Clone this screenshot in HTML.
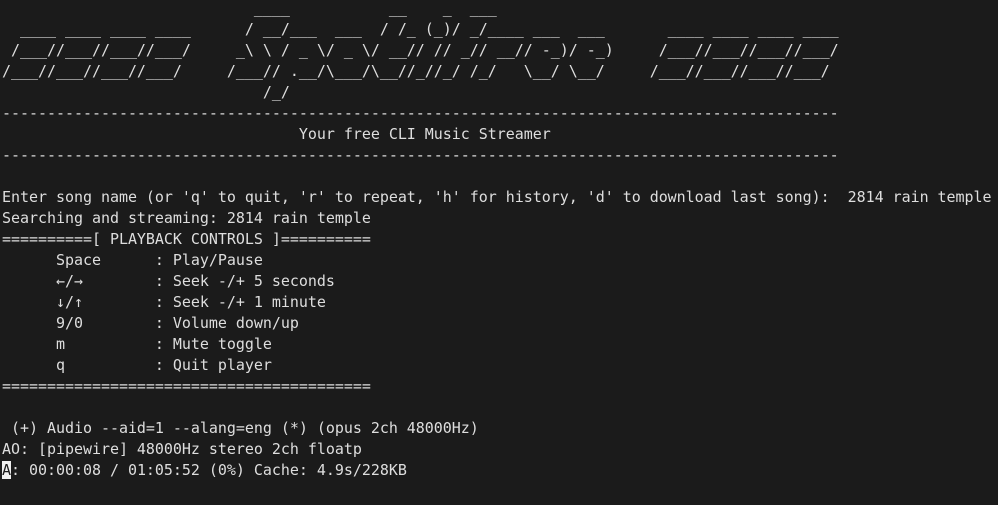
<!DOCTYPE html>
<html><head><meta charset="utf-8"><style>
html,body{margin:0;padding:0;background:#1b1b1b;width:998px;height:505px;overflow:hidden}
pre{position:absolute;left:2px;top:-2.5px;margin:0;font-family:"DejaVu Sans Mono","Liberation Mono",monospace;font-size:15px;line-height:21px;letter-spacing:-0.035px;color:#dedede;white-space:pre}
.cur{background:#f0f0f0;color:#1b1b1b}
</style></head><body>
<pre>                            ____           __    _  ___
  ____ ____ ____ ____      / __/___  ___  / /_ (_)/ _/____ ___  ___       ____ ____ ____ ____
 /___//___//___//___/     _\ \ / _ \/ _ \/ __// // _// __// -_)/ -_)     /___//___//___//___/
/___//___//___//___/     /___// .__/\___/\__//_//_/ /_/   \__/ \__/     /___//___//___//___/
                             /_/
---------------------------------------------------------------------------------------------
                                 Your free CLI Music Streamer
---------------------------------------------------------------------------------------------

Enter song name (or 'q' to quit, 'r' to repeat, 'h' for history, 'd' to download last song):  2814 rain temple
Searching and streaming: 2814 rain temple
==========[ PLAYBACK CONTROLS ]==========
      Space      : Play/Pause
      ←/→        : Seek -/+ 5 seconds
      ↓/↑        : Seek -/+ 1 minute
      9/0        : Volume down/up
      m          : Mute toggle
      q          : Quit player
=========================================

 (+) Audio --aid=1 --alang=eng (*) (opus 2ch 48000Hz)
AO: [pipewire] 48000Hz stereo 2ch floatp
<span class="cur">A</span>: 00:00:08 / 01:05:52 (0%) Cache: 4.9s/228KB</pre>
</body></html>
